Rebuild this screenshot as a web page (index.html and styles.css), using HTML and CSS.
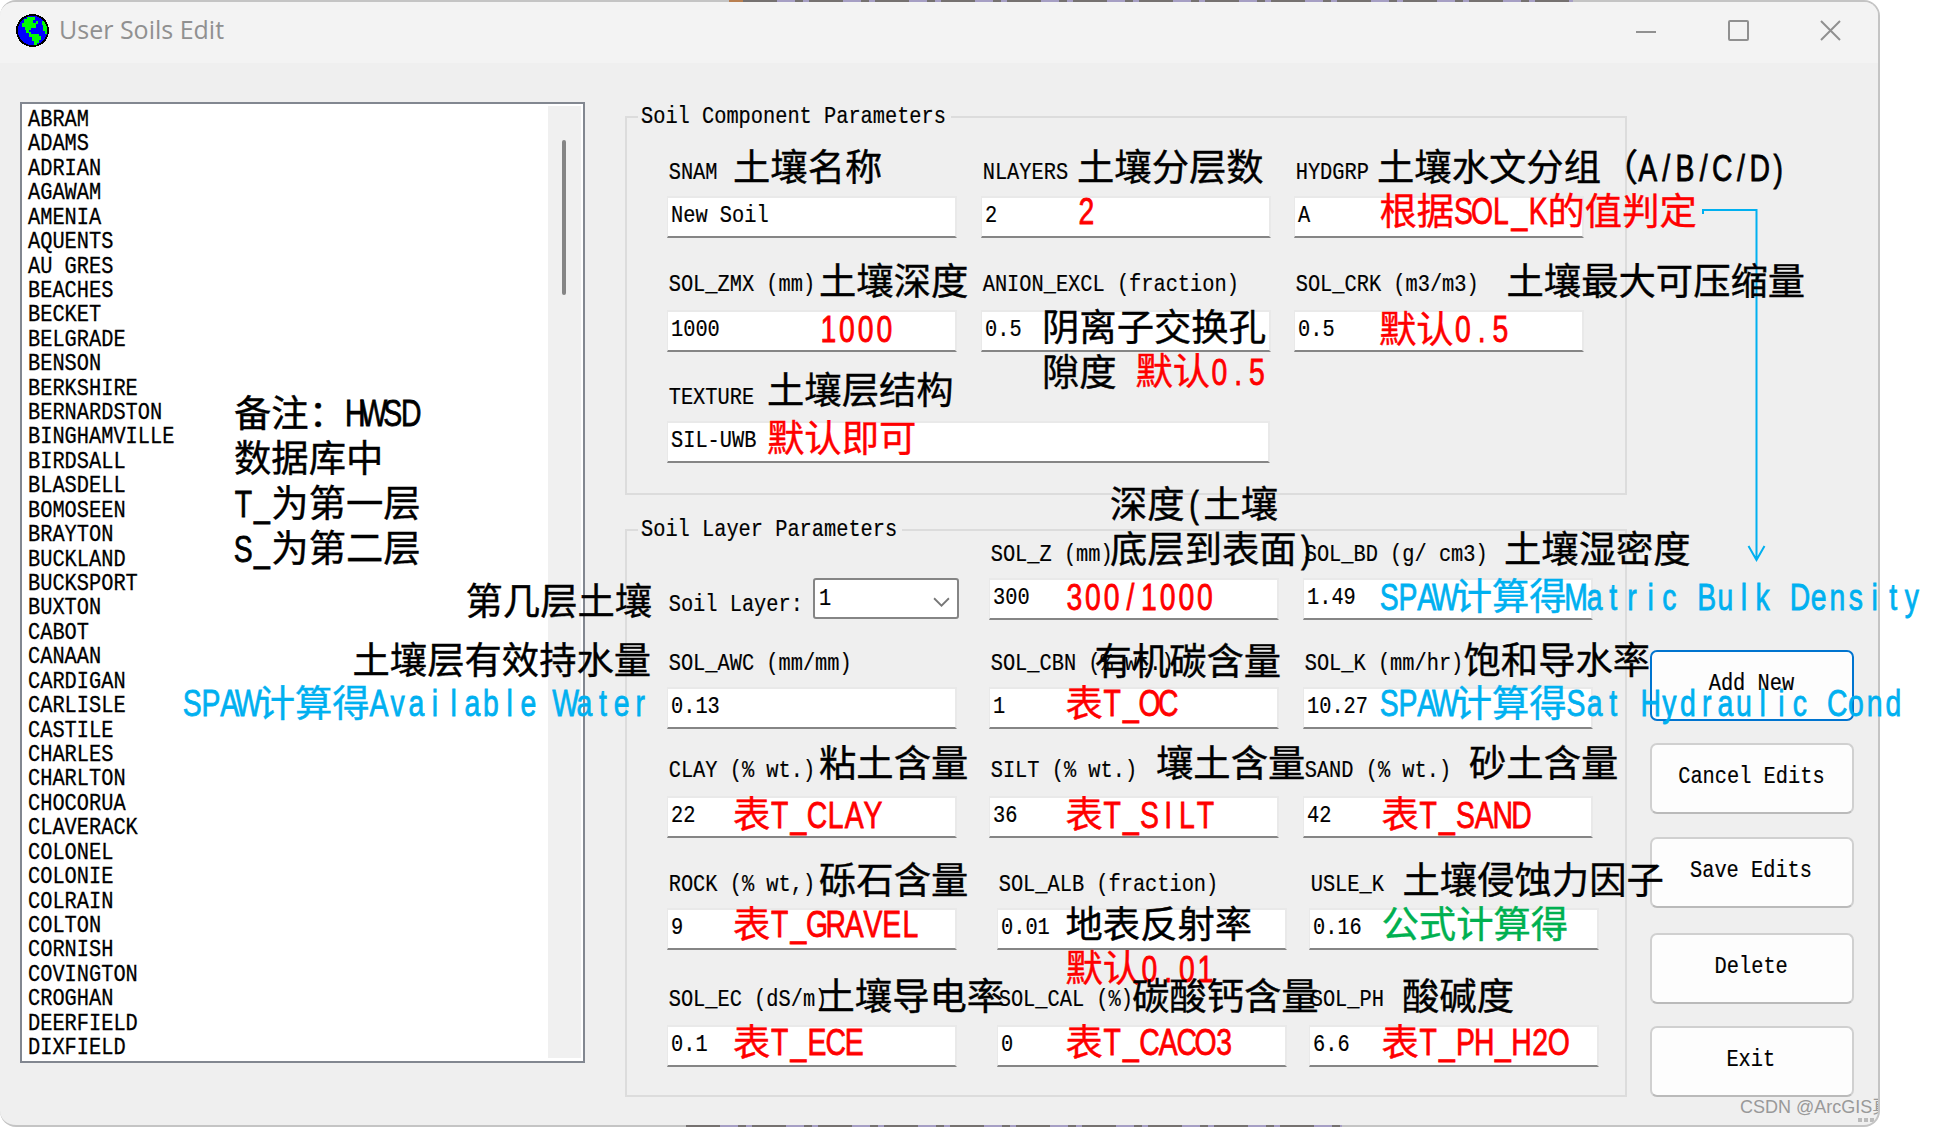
FILE: index.html
```html
<!DOCTYPE html>
<html lang="zh-CN">
<head>
  <meta charset="UTF-8" />
  <title>User Soils Edit</title>
  <link rel="stylesheet" href="styles.css">
</head>
<body>
  <div class="window">
    <header class="titlebar">
      <svg class="globe" viewBox="0 0 33 33" shape-rendering="crispEdges">
        <circle cx="16.5" cy="16.5" r="15.6" fill="#0000ff" stroke="#000" stroke-width="1.8" />
        <path fill="#00ff00" d="M8 5h3V3h8v3h-2v3h3V7h2v3h-2v4h-5v2h-2v2h2v2h8v2h2v4h-2v3h-2v2h-3v-4h-2v-4h-3v-4h-3v-3H9v-3H6V9h2z" />
        <path fill="#00ff00" d="M26 7h2l3 6v7h-2v-3h-2v-6h-1z" />
      </svg>
      <span class="title">User Soils Edit</span>
      <div class="controls">
        <svg viewBox="0 0 21 21"><path d="M0 12h20" /></svg>
        <svg viewBox="0 0 21 21"><rect x="1" y="1" width="19" height="19" rx="1" /></svg>
        <svg viewBox="0 0 21 21"><path d="M1 1l19 19M20 1L1 20" /></svg>
      </div>
    </header>

    <main class="content">
      <div class="listbox">
        <ul class="soils">
          <li>ABRAM</li>
          <li>ADAMS</li>
          <li>ADRIAN</li>
          <li>AGAWAM</li>
          <li>AMENIA</li>
          <li>AQUENTS</li>
          <li>AU GRES</li>
          <li>BEACHES</li>
          <li>BECKET</li>
          <li>BELGRADE</li>
          <li>BENSON</li>
          <li>BERKSHIRE</li>
          <li>BERNARDSTON</li>
          <li>BINGHAMVILLE</li>
          <li>BIRDSALL</li>
          <li>BLASDELL</li>
          <li>BOMOSEEN</li>
          <li>BRAYTON</li>
          <li>BUCKLAND</li>
          <li>BUCKSPORT</li>
          <li>BUXTON</li>
          <li>CABOT</li>
          <li>CANAAN</li>
          <li>CARDIGAN</li>
          <li>CARLISLE</li>
          <li>CASTILE</li>
          <li>CHARLES</li>
          <li>CHARLTON</li>
          <li>CHOCORUA</li>
          <li>CLAVERACK</li>
          <li>COLONEL</li>
          <li>COLONIE</li>
          <li>COLRAIN</li>
          <li>COLTON</li>
          <li>CORNISH</li>
          <li>COVINGTON</li>
          <li>CROGHAN</li>
          <li>DEERFIELD</li>
          <li>DIXFIELD</li>
        </ul>
        <div class="scrollbar"><div class="thumb"></div></div>
      </div>

      <div class="groups">
        <section class="group component">
          <h2><span class="sim">Soil Component Parameters</span></h2>
          <div class="fields">
            <div class="field"><label class="sim">SNAM</label><div class="box"><span class="sim">New Soil</span></div></div>
            <div class="field"><label class="sim">NLAYERS</label><div class="box"><span class="sim">2</span></div></div>
            <div class="field"><label class="sim">HYDGRP</label><div class="box"><span class="sim">A</span></div></div>
            <div class="field raised"><label class="sim">SOL_ZMX (mm)</label><div class="box"><span class="sim">1000</span></div></div>
            <div class="field raised"><label class="sim">ANION_EXCL (fraction)</label><div class="box"><span class="sim">0.5</span></div></div>
            <div class="field raised"><label class="sim">SOL_CRK (m3/m3)</label><div class="box"><span class="sim">0.5</span></div></div>
            <div class="field wide"><label class="sim">TEXTURE</label><div class="box"><span class="sim">SIL-UWB</span></div></div>
          </div>
        </section>

        <section class="group layer">
          <h2><span class="sim">Soil Layer Parameters</span></h2>
          <div class="fields">
            <div class="layer-select">
              <label class="sim">Soil Layer:</label>
              <div class="select">
                <span class="sim">1</span>
                <svg viewBox="0 0 16 10"><path d="M1 1l7 7 7-7" /></svg>
              </div>
            </div>
            <div class="field"><label class="sim">SOL_Z (mm)</label><div class="box"><span class="sim">300</span></div></div>
            <div class="field"><label class="sim">SOL_BD (g/ cm3)</label><div class="box"><span class="sim">1.49</span></div></div>
            <div class="field"><label class="sim">SOL_AWC (mm/mm)</label><div class="box"><span class="sim">0.13</span></div></div>
            <div class="field"><label class="sim">SOL_CBN (% wt.)</label><div class="box"><span class="sim">1</span></div></div>
            <div class="field"><label class="sim">SOL_K (mm/hr)</label><div class="box"><span class="sim">10.27</span></div></div>
            <div class="field raised"><label class="sim">CLAY (% wt.)</label><div class="box"><span class="sim">22</span></div></div>
            <div class="field raised"><label class="sim">SILT (% wt.)</label><div class="box"><span class="sim">36</span></div></div>
            <div class="field raised"><label class="sim">SAND (% wt.)</label><div class="box"><span class="sim">42</span></div></div>
          </div>
          <div class="fields shifted">
            <div class="field"><label class="sim">ROCK (% wt,)</label><div class="box"><span class="sim">9</span></div></div>
            <div class="field"><label class="sim">SOL_ALB (fraction)</label><div class="box"><span class="sim">0.01</span></div></div>
            <div class="field"><label class="sim">USLE_K</label><div class="box"><span class="sim">0.16</span></div></div>
            <div class="field raised"><label class="sim">SOL_EC (dS/m)</label><div class="box"><span class="sim">0.1</span></div></div>
            <div class="field raised"><label class="sim">SOL_CAL (%)</label><div class="box"><span class="sim">0</span></div></div>
            <div class="field raised"><label class="sim">SOL_PH</label><div class="box"><span class="sim">6.6</span></div></div>
          </div>
        </section>
      </div>

      <div class="buttons">
        <button class="active"><span class="sim">Add New</span></button>
        <button><span class="sim">Cancel Edits</span></button>
        <button><span class="sim">Save Edits</span></button>
        <button><span class="sim">Delete</span></button>
        <button><span class="sim">Exit</span></button>
      </div>
    </main>
    <div class="watermark">CSDN @ArcGIS真</div>
    <div class="grip"></div>
  </div>
  <div class="edge top"></div>
  <div class="edge bottom"></div>

  <!-- notes written over the form -->
  <svg class="notes" id="notes" viewBox="0 0 1944 1127">
    <path class="arrow" d="M1703 214v-4h53.5v349M1748.5 546l8 14 8-14" />
  </svg>

  <script>
    const SIZE = 37.33;
    const HALF = SIZE / 2;
    const SQUEEZE = 0.76;

    // x, baseline, colour, text
    const notes = [
      [234, 426.5, "black", "备注：HWSD"],
      [234, 471.5, "black", "数据库中"],
      [234, 517, "black", "T_为第一层"],
      [234, 562, "black", "S_为第二层"],
      [733, 181, "black", "土壤名称"],
      [1077, 181, "black", "土壤分层数"],
      [1377, 181, "black", "土壤水文分组（A/B/C/D)"],
      [1077, 224, "red", "2"],
      [1379.5, 224.5, "red", "根据SOL_K的值判定"],
      [819, 294.5, "black", "土壤深度"],
      [1506.5, 294.5, "black", "土壤最大可压缩量"],
      [819, 342, "red", "1000"],
      [1042, 340.5, "black", "阴离子交换孔"],
      [1042, 385.5, "black", "隙度"],
      [1135.5, 385, "red", "默认0.5"],
      [1379, 342.5, "red", "默认0.5"],
      [767, 404, "black", "土壤层结构"],
      [767, 452, "red", "默认即可"],
      [1110, 517.5, "black", "深度(土壤"],
      [1110, 562.5, "black", "底层到表面)"],
      [1504, 563, "black", "土壤湿密度"],
      [465.5, 615, "black", "第几层土壤"],
      [1065, 610, "red", "300/1000"],
      [1380, 610, "blue", "SPAW计算得Matric Bulk Density"],
      [352.5, 674, "black", "土壤层有效持水量"],
      [1094.5, 675, "black", "有机碳含量"],
      [1463.5, 674, "black", "饱和导水率"],
      [183, 716.5, "blue", "SPAW计算得Available Water"],
      [1065.5, 716.5, "red", "表T_OC"],
      [1380, 716.5, "blue", "SPAW计算得Sat Hydraulic Cond"],
      [819, 777, "black", "粘土含量"],
      [1156, 777, "black", "壤土含量"],
      [1469, 777, "black", "砂土含量"],
      [733, 828, "red", "表T_CLAY"],
      [1065.5, 828, "red", "表T_SILT"],
      [1381.5, 828, "red", "表T_SAND"],
      [819, 893.5, "black", "砾石含量"],
      [1402.5, 893.5, "black", "土壤侵蚀力因子"],
      [733, 937.5, "red", "表T_GRAVEL"],
      [1065.5, 937.5, "black", "地表反射率"],
      [1381.5, 937.5, "green", "公式计算得"],
      [1065.5, 982, "red", "默认0.01"],
      [817.5, 1009.5, "black", "土壤导电率"],
      [1132, 1009.5, "black", "碳酸钙含量"],
      [1402, 1009.5, "black", "酸碱度"],
      [733, 1055.5, "red", "表T_ECE"],
      [1065.5, 1055.5, "red", "表T_CACO3"],
      [1381.5, 1055.5, "red", "表T_PH_H2O"]
    ];

    function addText(x, y, color, text, latin) {
      const el = document.createElementNS("http://www.w3.org/2000/svg", "text");
      el.textContent = text;
      el.setAttribute("y", y);
      el.setAttribute("class", color + (latin ? " latin" : ""));
      if (latin) {
        // every latin character is centred in a half-width cell
        const xs = [...text].map((c, i) => ((x + (i + 0.5) * HALF) / SQUEEZE).toFixed(2));
        el.setAttribute("x", xs.join(" "));
        el.setAttribute("transform", `scale(${SQUEEZE} 1)`);
      } else {
        el.setAttribute("x", x);
      }
      document.getElementById("notes").appendChild(el);
    }

    notes.forEach(([x, y, color, text]) => {
      text.match(/[\x20-\x7e]+|[^\x20-\x7e]+/g).forEach(run => {
        const latin = run.charCodeAt(0) < 127;
        addText(x, y, color, run, latin);
        x += run.length * (latin ? HALF : SIZE);
      });
    });
  </script>
</body>
</html>
```

FILE: styles.css
```css
* {
  box-sizing: border-box;
}

body {
  margin: 0;
  width: 1944px;
  height: 1127px;
  background: #fff;
  position: relative;
  overflow: hidden;
}

.window {
  width: 1880px;
  height: 1127px;
  background: #efefef;
  border: 2px solid #c4c4c4;
  border-left: none;
  border-radius: 16px;
  overflow: hidden;
  position: relative;
}

/* narrow fixed-width face, 12.2px a character */
.sim {
  display: inline-block;
  font: 24px/26px "Liberation Mono", monospace;
  color: #000;
  white-space: pre;
  transform: scaleX(0.847);
  transform-origin: 0 0;
  -webkit-text-stroke: 0.2px #000;
}

.titlebar {
  height: 61px;
  background: #f3f3f3;
  display: flex;
  align-items: flex-start;
  padding: 12px 37px 0 16px;
}

.globe {
  width: 33px;
  height: 33px;
}

.title {
  margin-left: 10px;
  font: 25px/31px "Open Sans", sans-serif;
  color: #909090;
}

.controls {
  margin-left: auto;
  margin-top: 6px;
  display: flex;
  gap: 71px;
}

.controls svg {
  width: 21px;
  height: 21px;
  fill: none;
  stroke: #909090;
  stroke-width: 2;
}

.content {
  display: flex;
  align-items: flex-start;
  padding: 39px 0 0 20px;
}

.listbox {
  width: 565px;
  height: 961px;
  background: #fff;
  border: 2px solid #828790;
  display: flex;
  justify-content: space-between;
  padding: 2px 2px 3px 6px;
}

.soils {
  list-style: none;
  margin: 2px 0 0;
  padding: 0;
  height: 952px;
  font: 24px/24.42px "Liberation Mono", monospace;
  transform: scaleX(0.847);
  transform-origin: 0 0;
  -webkit-text-stroke: 0.3px #000;
}

.scrollbar {
  width: 33px;
  background: #f0f0f0;
  padding: 34px 0 0 14px;
}

.thumb {
  width: 4px;
  height: 155px;
  background: #858585;
  border-radius: 2px;
}

.groups {
  width: 1002px;
  margin: 14px 0 0 40px;
}

.group {
  border: 2px solid #dcdcdc;
}

.component {
  height: 379px;
}

.layer {
  height: 568px;
  margin-top: 34px;
}

.group h2 {
  margin: -16px 0 0 11px;
  height: 26px;
  width: 313px;
  padding-left: 3px;
  background: #efefef;
  overflow: visible;
}

.layer h2 {
  width: 264px;
}

.fields {
  display: grid;
  margin-left: 40px;
}

.component .fields {
  margin-top: 32px;
  grid-template-columns: 314px 313px 288px;
  grid-template-rows: 114px 111px 78px;
}

.layer .fields {
  margin-top: 1px;
  grid-template-columns: 322px 314px 287px;
  grid-template-rows: 109px 109px 112px;
}

.layer .fields.shifted {
  margin-top: 0;
  grid-template-columns: 330px 312px 289px;
  grid-template-rows: 117px 78px;
}

.field {
  width: 290px;
}

.field label {
  display: block;
  height: 36px;
  padding-left: 2px;
}

/* rows whose captions sit a little further from the box */
.raised label {
  height: 38px;
  margin-top: -2px;
}

.wide {
  grid-column: span 2;
  width: 603px;
}

.box {
  height: 42px;
  background: #fff;
  border: 2px solid #e9e9e9;
  border-left-width: 1px;
  border-bottom-color: #858585;
  padding: 5px 0 0 3px;
  line-height: 0;
}

.layer-select {
  display: flex;
  padding-top: 36px;
}

.layer-select label {
  width: 146px;
  padding-left: 2px;
  margin-top: 14px;
}

.select {
  width: 146px;
  height: 41px;
  background: #fff;
  border: 2px solid #858585;
  border-radius: 3px;
  display: flex;
  justify-content: space-between;
  padding: 6px 7px 0 4px;
}

.select svg {
  width: 17px;
  height: 11px;
  margin-top: 11px;
  fill: none;
  stroke: #777;
  stroke-width: 1.7;
}

.buttons {
  margin: 548px 0 0 23px;
  display: grid;
  grid-template-rows: 93px 94px 96px 93px 71px;
}

.buttons button {
  width: 204px;
  height: 71px;
  background: #fdfdfd;
  border: 2px solid #d0d0d0;
  border-bottom-color: #bababa;
  border-radius: 7px;
  padding: 0 2px 3px 0;
}

.buttons .sim {
  transform-origin: 50% 0;
}

.buttons .active {
  border-color: #0074cf;
}

.watermark {
  position: absolute;
  left: 1740px;
  top: 1093px;
  width: 140px;
  overflow: hidden;
  white-space: nowrap;
  font: 18px/24px "Liberation Sans", "Noto Sans CJK SC", sans-serif;
  color: #999;
}

.grip {
  position: absolute;
  left: 1858px;
  top: 1116px;
  width: 16px;
  height: 4px;
  background: repeating-linear-gradient(90deg, #bbb 0 4px, transparent 4px 6px);
}

/* slivers of the page behind the dialog */
.edge {
  position: absolute;
  height: 2px;
  background: repeating-linear-gradient(90deg, #757170 0 34px, #a69fc4 34px 52px, #757170 52px 60px, #a69fc4 60px 66px);
}

.edge.top {
  left: 743px;
  top: 0;
  width: 830px;
  border-left: 0;
}

.edge.top::before {
  content: "";
  position: absolute;
  left: -14px;
  width: 14px;
  height: 2px;
  background: #b97f50;
}

.edge.bottom {
  left: 686px;
  top: 1125px;
  width: 656px;
}

.notes {
  position: absolute;
  left: 0;
  top: 0;
  width: 1944px;
  height: 1127px;
  font: 37.33px "Noto Sans CJK SC", sans-serif;
  stroke-width: 0.4;
}

.notes .latin {
  font-family: "Liberation Sans", sans-serif;
  text-anchor: middle;
  stroke-width: 0.8;
}

.notes .black {
  fill: #000;
  stroke: #000;
}

.notes .red {
  fill: #f00;
  stroke: #f00;
}

.notes .blue {
  fill: #00b0f0;
  stroke: #00b0f0;
}

.notes .green {
  fill: #00b050;
  stroke: #00b050;
}

.notes .arrow {
  fill: none;
  stroke: #00b0f0;
  stroke-width: 2;
}
```
